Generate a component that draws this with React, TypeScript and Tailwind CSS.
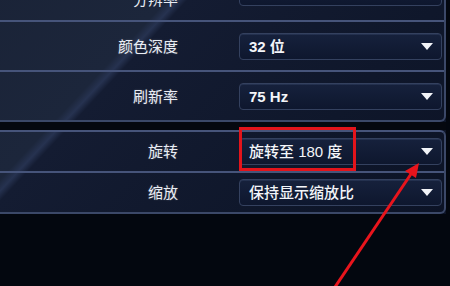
const font = "font-['Liberation_Sans','Noto_Sans_CJK_SC',sans-serif]";

function Arrow() {
  return (
    <svg width="12" height="7" viewBox="0 0 12 7" className="shrink-0">
      <polygon points="0,0 12,0 6,7" fill="#f2f4f8" />
    </svg>
  );
}

function Select({ value, bold }: { value: string; bold?: boolean }) {
  return (
    <div className="flex h-[27px] w-[203px] items-center justify-between rounded-[4px] border border-[#34415f] bg-[linear-gradient(180deg,#16213c,#0e172e)] pl-[9px] pr-[8px] shadow-[inset_0_1px_0_rgba(120,140,190,0.15)]">
      <span className={`text-[15px] leading-none text-[#f3f5f9] ${bold ? "font-bold" : "font-medium"}`}>
        {value}
      </span>
      <Arrow />
    </div>
  );
}

function Row({ label, value, bold, className }: { label: string; value: string; bold?: boolean; className: string }) {
  return (
    <div className={`flex items-center ${className}`}>
      <div className="w-[178px] text-right text-[15px] leading-none text-[#e9edf4] [text-shadow:0_0_2px_rgba(255,255,255,0.25)]">
        {label}
      </div>
      <div className="ml-[61px]">
        <Select value={value} bold={bold} />
      </div>
    </div>
  );
}

export default function App() {
  return (
    <div className={`relative h-[286px] w-[450px] overflow-hidden bg-[#03070f] ${font}`}>
      <div className="w-[446px] bg-[linear-gradient(133deg,#1a2337_0%,#1c263b_29%,#263250_30.6%,#141c32_32%,#0f172b_70%,#0c1326_100%)]">
        {/* display group, first row scrolled off the top */}
        <div className="-mt-[30px] rounded-br-[6px] border-r-2 border-b-2 border-[#3b4868]">
          <div className="flex h-[50px] items-start pt-[9px]">
            <div className="mt-[13px] w-[178px] text-right text-[15px] leading-none text-[#e9edf4]">分辨率</div>
            <div className="ml-[61px]">
              <Select value="" />
            </div>
          </div>
          <Row label="颜色深度" value="32 位" bold className="h-[50px] border-t-2 border-[#46547a]" />
          <Row label="刷新率" value="75 Hz" bold className="h-[50px] border-t-2 border-[#46547a]" />
        </div>
        <div className="h-[8px] bg-[#05080f]" />
        {/* rotation group */}
        <div className="rounded-r-[6px] border-y-2 border-r-2 border-[#3b4868] border-t-[#46547a]">
          <Row label="旋转" value="旋转至 180 度" className="h-[39px]" />
          <Row label="缩放" value="保持显示缩放比" className="h-[41px] border-t-2 border-[#46547a]" />
        </div>
      </div>

      {/* annotation */}
      <div className="absolute left-[239px] top-[127px] h-[44px] w-[117px] border-[3px] border-[#e3141b]" />
      <svg className="absolute left-0 top-0" width="450" height="286" viewBox="0 0 450 286">
        <line x1="333" y1="290" x2="411" y2="174" stroke="#e8141c" strokeWidth="3" />
        <polygon points="419,163 416,178 405,171" fill="#e8141c" />
      </svg>
    </div>
  );
}
